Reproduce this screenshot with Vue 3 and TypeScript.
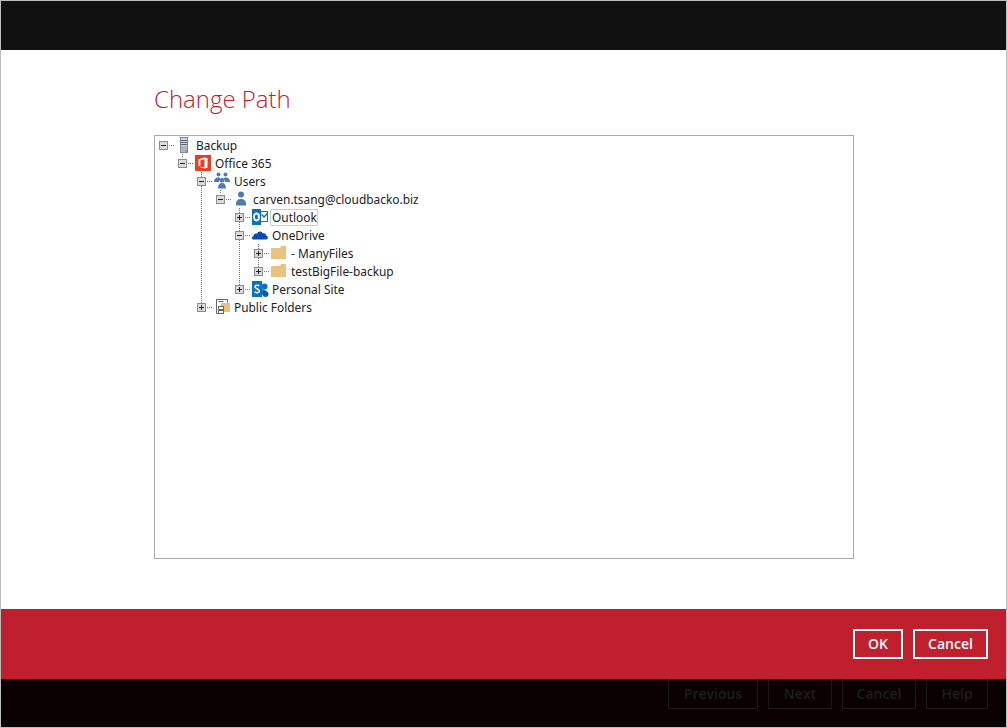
<script setup lang="ts">
interface Row { label: string; level: number; open: boolean; icon: string; focus?: boolean }
const rows: Row[] = [
  { label: 'Backup', level: 0, open: true, icon: 'server' },
  { label: 'Office 365', level: 1, open: true, icon: 'office' },
  { label: 'Users', level: 2, open: true, icon: 'users' },
  { label: 'carven.tsang@cloudbacko.biz', level: 3, open: true, icon: 'user' },
  { label: 'Outlook', level: 4, open: false, icon: 'outlook', focus: true },
  { label: 'OneDrive', level: 4, open: true, icon: 'onedrive' },
  { label: '- ManyFiles', level: 5, open: false, icon: 'folder' },
  { label: 'testBigFile-backup', level: 5, open: false, icon: 'folder' },
  { label: 'Personal Site', level: 4, open: false, icon: 'sharepoint' },
  { label: 'Public Folders', level: 2, open: false, icon: 'public' },
]
const guides = [
  { x: 27.5, y1: 18, y2: 22 },
  { x: 46.5, y1: 36, y2: 167 },
  { x: 65.5, y1: 54, y2: 58 },
  { x: 84.5, y1: 72, y2: 149 },
  { x: 103.5, y1: 108, y2: 131 },
]
const behind = ['Previous', 'Next', 'Cancel', 'Help']
</script>

<template>
  <div class="window">
    <header class="topbar"></header>
    <main class="content">
      <h1 class="title">Change Path</h1>
      <div class="tree">
        <svg class="guides" width="698" height="421" aria-hidden="true">
          <line v-for="(g, i) in guides" :key="i" :x1="g.x" :x2="g.x" :y1="g.y1" :y2="g.y2" stroke="#777" stroke-dasharray="1 1" />
        </svg>
        <div v-for="r in rows" :key="r.label" class="row" :style="{ paddingLeft: r.level * 19 + 4 + 'px' }">
          <span class="exp"><i class="h"></i><i v-if="!r.open" class="v"></i></span>
          <span class="dots"></span>
          <span class="ico">
            <svg v-if="r.icon === 'server'" width="18" height="18" viewBox="0 0 18 18">
              <rect x="5" y="1" width="8" height="16" fill="#7f8a90" />
              <rect x="6" y="2" width="6" height="14" fill="#d3d8dc" />
              <path d="M6 4.500h6M6 6.500h6M6 8.500h6" stroke="#56616a" />
              <rect x="6" y="10" width="6" height="6" fill="#aeb6bb" />
              <rect x="10" y="14" width="2" height="2" fill="#6fc43a" />
            </svg>
            <svg v-else-if="r.icon === 'office'" width="18" height="18" viewBox="0 0 18 18">
              <rect x="1" y="1" width="16" height="16" fill="#ea3e23" />
              <path d="M4.500 5.200 10.500 3.400l3 .9v9.400l-3 .9-6-2.100 6 .8V5.200L6.400 6.200v5.200l-1.900.8z" fill="#fff" />
            </svg>
            <svg v-else-if="r.icon === 'users'" width="18" height="18" viewBox="0 0 18 18" fill="#4b7db5">
              <circle cx="5.500" cy="2.500" r="2" /><circle cx="12.500" cy="2.500" r="2" />
              <path d="M1 10c0-3 1.500-4.500 4-4.500 1 0 2 .4 2.500 1L5.700 10zM17 10c0-3-1.500-4.500-4-4.500-1 0-2 .4-2.500 1l1.800 3.500z" />
              <circle cx="9" cy="8.300" r="2.300" />
              <path d="M5 16.500c0-3.500 1.500-5.500 4-5.500s4 2 4 5.500z" />
            </svg>
            <svg v-else-if="r.icon === 'user'" width="18" height="18" viewBox="0 0 18 18" fill="#4b7db5">
              <circle cx="9" cy="4.500" r="3" />
              <path d="M4 15.500v-2c0-3 2-4.500 5-4.500s5 1.500 5 4.500v2z" />
            </svg>
            <svg v-else-if="r.icon === 'outlook'" width="18" height="18" viewBox="0 0 18 18">
              <rect x="8" y="3.500" width="8.500" height="10" fill="#fff" stroke="#0a72c4" />
              <path d="M10.500 6.500l2.500 2.500 3.500-3.500" fill="none" stroke="#0a72c4" stroke-width="1.500" />
              <rect x="1" y="1" width="9" height="16" fill="#0a72c4" />
              <ellipse cx="5.500" cy="9" rx="2.500" ry="3.500" fill="none" stroke="#fff" stroke-width="1.800" />
            </svg>
            <svg v-else-if="r.icon === 'onedrive'" width="18" height="18" viewBox="0 0 18 18">
              <path d="M2.500 13.500C.5 13.500.5 10.500 2.500 10c0-2 2-3 3.500-2.200C7 5 10.500 4.500 12 7.500c2-.5 3 .5 3 2 2.500 0 2.500 4 0 4z" fill="#0d4cad" />
            </svg>
            <svg v-else-if="r.icon === 'folder'" width="18" height="18" viewBox="0 0 18 18">
              <path d="M1 4h9l1-2h5v13H1z" fill="#e9c27f" />
            </svg>
            <svg v-else-if="r.icon === 'sharepoint'" width="18" height="18" viewBox="0 0 18 18">
              <circle cx="13.500" cy="6.500" r="3" fill="#0a72c4" />
              <circle cx="12" cy="12" r="2.800" fill="#0a72c4" />
              <circle cx="14.500" cy="14" r="3" fill="#0a5ea6" />
              <rect x="1" y="1" width="10" height="16" fill="#0a72c4" />
              <path d="M8.300 6C7 4.700 3.800 5 4 7c.2 2 4.200 1.500 4.300 4 .1 2-3.300 2.200-4.600.8" fill="none" stroke="#fff" stroke-width="1.500" />
            </svg>
            <svg v-else width="18" height="18" viewBox="0 0 18 18">
              <path d="M3.500 1.500h11v3M3.500 1.500v14h7M5.500 3.500h5" fill="none" stroke="#666" />
              <path d="M8 5h9v9H11V8H8z" fill="#e9c27f" />
              <rect x="5.500" y="8.500" width="5" height="3" fill="#fff" stroke="#666" />
              <rect x="5.500" y="12.500" width="5" height="3" fill="#fff" stroke="#666" />
            </svg>
          </span>
          <span class="label" :class="{ focus: r.focus }">{{ r.label }}</span>
        </div>
      </div>
    </main>
    <footer class="actions">
      <button class="btn ok">OK</button>
      <button class="btn cancel">Cancel</button>
    </footer>
    <div class="under">
      <span v-for="b in behind" :key="b" class="ghost" :class="'g-' + b.toLowerCase()">{{ b }}</span>
    </div>
  </div>
</template>

<style>
html, body { margin: 0; background: #bbb; }
</style>

<style scoped>
.window {
  box-sizing: border-box;
  width: 1007px;
  height: 728px;
  border: 1px solid #bdbdbd;
  display: flex;
  flex-direction: column;
  background: #fff;
  font-family: "Open Sans", "Noto Sans", sans-serif;
}
.topbar { height: 49px; background: #111; flex: none; }
.content {
  flex: none;
  box-sizing: border-box;
  height: 559px;
  padding: 32px 153px 0;
  display: flex;
  flex-direction: column;
}
.title {
  margin: 0 0 20px;
  height: 33px;
  line-height: 33px;
  font-size: 24px;
  font-weight: 300;
  color: #c0202f;
}
.tree {
  position: relative;
  width: 700px;
  height: 424px;
  box-sizing: border-box;
  border: 1px solid #aaa;
  background: #fff;
  flex: none;
  font-family: "Noto Sans", "Open Sans", sans-serif;
  font-size: 11.9px;
  color: #222;
}
.guides { position: absolute; left: 0; top: 0; pointer-events: none; }
.row {
  position: relative;
  height: 18px;
  display: flex;
  align-items: center;
}
.exp {
  box-sizing: border-box;
  width: 9px;
  height: 9px;
  border: 1px solid #8c8c8c;
  background: #dcdcdc;
  position: relative;
  flex: none;
}
.exp .h { position: absolute; left: 1px; top: 3px; width: 5px; height: 1px; background: #222; }
.exp .v { position: absolute; left: 3px; top: 1px; width: 1px; height: 5px; background: #222; }
.dots {
  width: 5px;
  margin: 0 1px;
  height: 1px;
  flex: none;
  background-image: linear-gradient(to right, #777 50%, transparent 50%);
  background-size: 2px 1px;
}
.ico { width: 18px; height: 18px; flex: none; display: block; }
.ico svg { display: block; }
.label {
  box-sizing: border-box;
  margin-left: 1px;
  padding: 0 0 0 1px;
  height: 17px;
  line-height: 15px;
  border: 1px solid transparent;
  white-space: nowrap;
}
.label.focus { border-color: #a6dcf3; border-radius: 1px; }
.actions {
  flex: none;
  height: 70px;
  background: #c01f2e;
  display: flex;
  justify-content: flex-end;
  align-items: center;
  gap: 10px;
  padding: 0 18px 0 0;
}
.btn {
  box-sizing: border-box;
  height: 30px;
  border: 2px solid #fff;
  background: #c01f2e;
  color: #fff;
  font-family: "Open Sans", "Noto Sans", sans-serif;
  font-size: 14px;
  font-weight: 600;
  padding: 0 0 2px;
}
.ok { width: 50px; }
.cancel { width: 75px; }
.under {
  flex: none;
  height: 48px;
  box-sizing: border-box;
  background: #0a0001;
  display: flex;
  justify-content: flex-end;
  gap: 10px;
  padding: 0 18px 0 0;
}
.ghost {
  box-sizing: border-box;
  height: 30px;
  line-height: 27px;
  border: 1px solid #1a1a1a;
  color: #1e1e1e;
  font-size: 14px;
  font-weight: 600;
  text-align: center;
}
.g-previous { width: 90px; }
.g-next { width: 64px; }
.g-cancel { width: 74px; }
.g-help { width: 62px; }
</style>
